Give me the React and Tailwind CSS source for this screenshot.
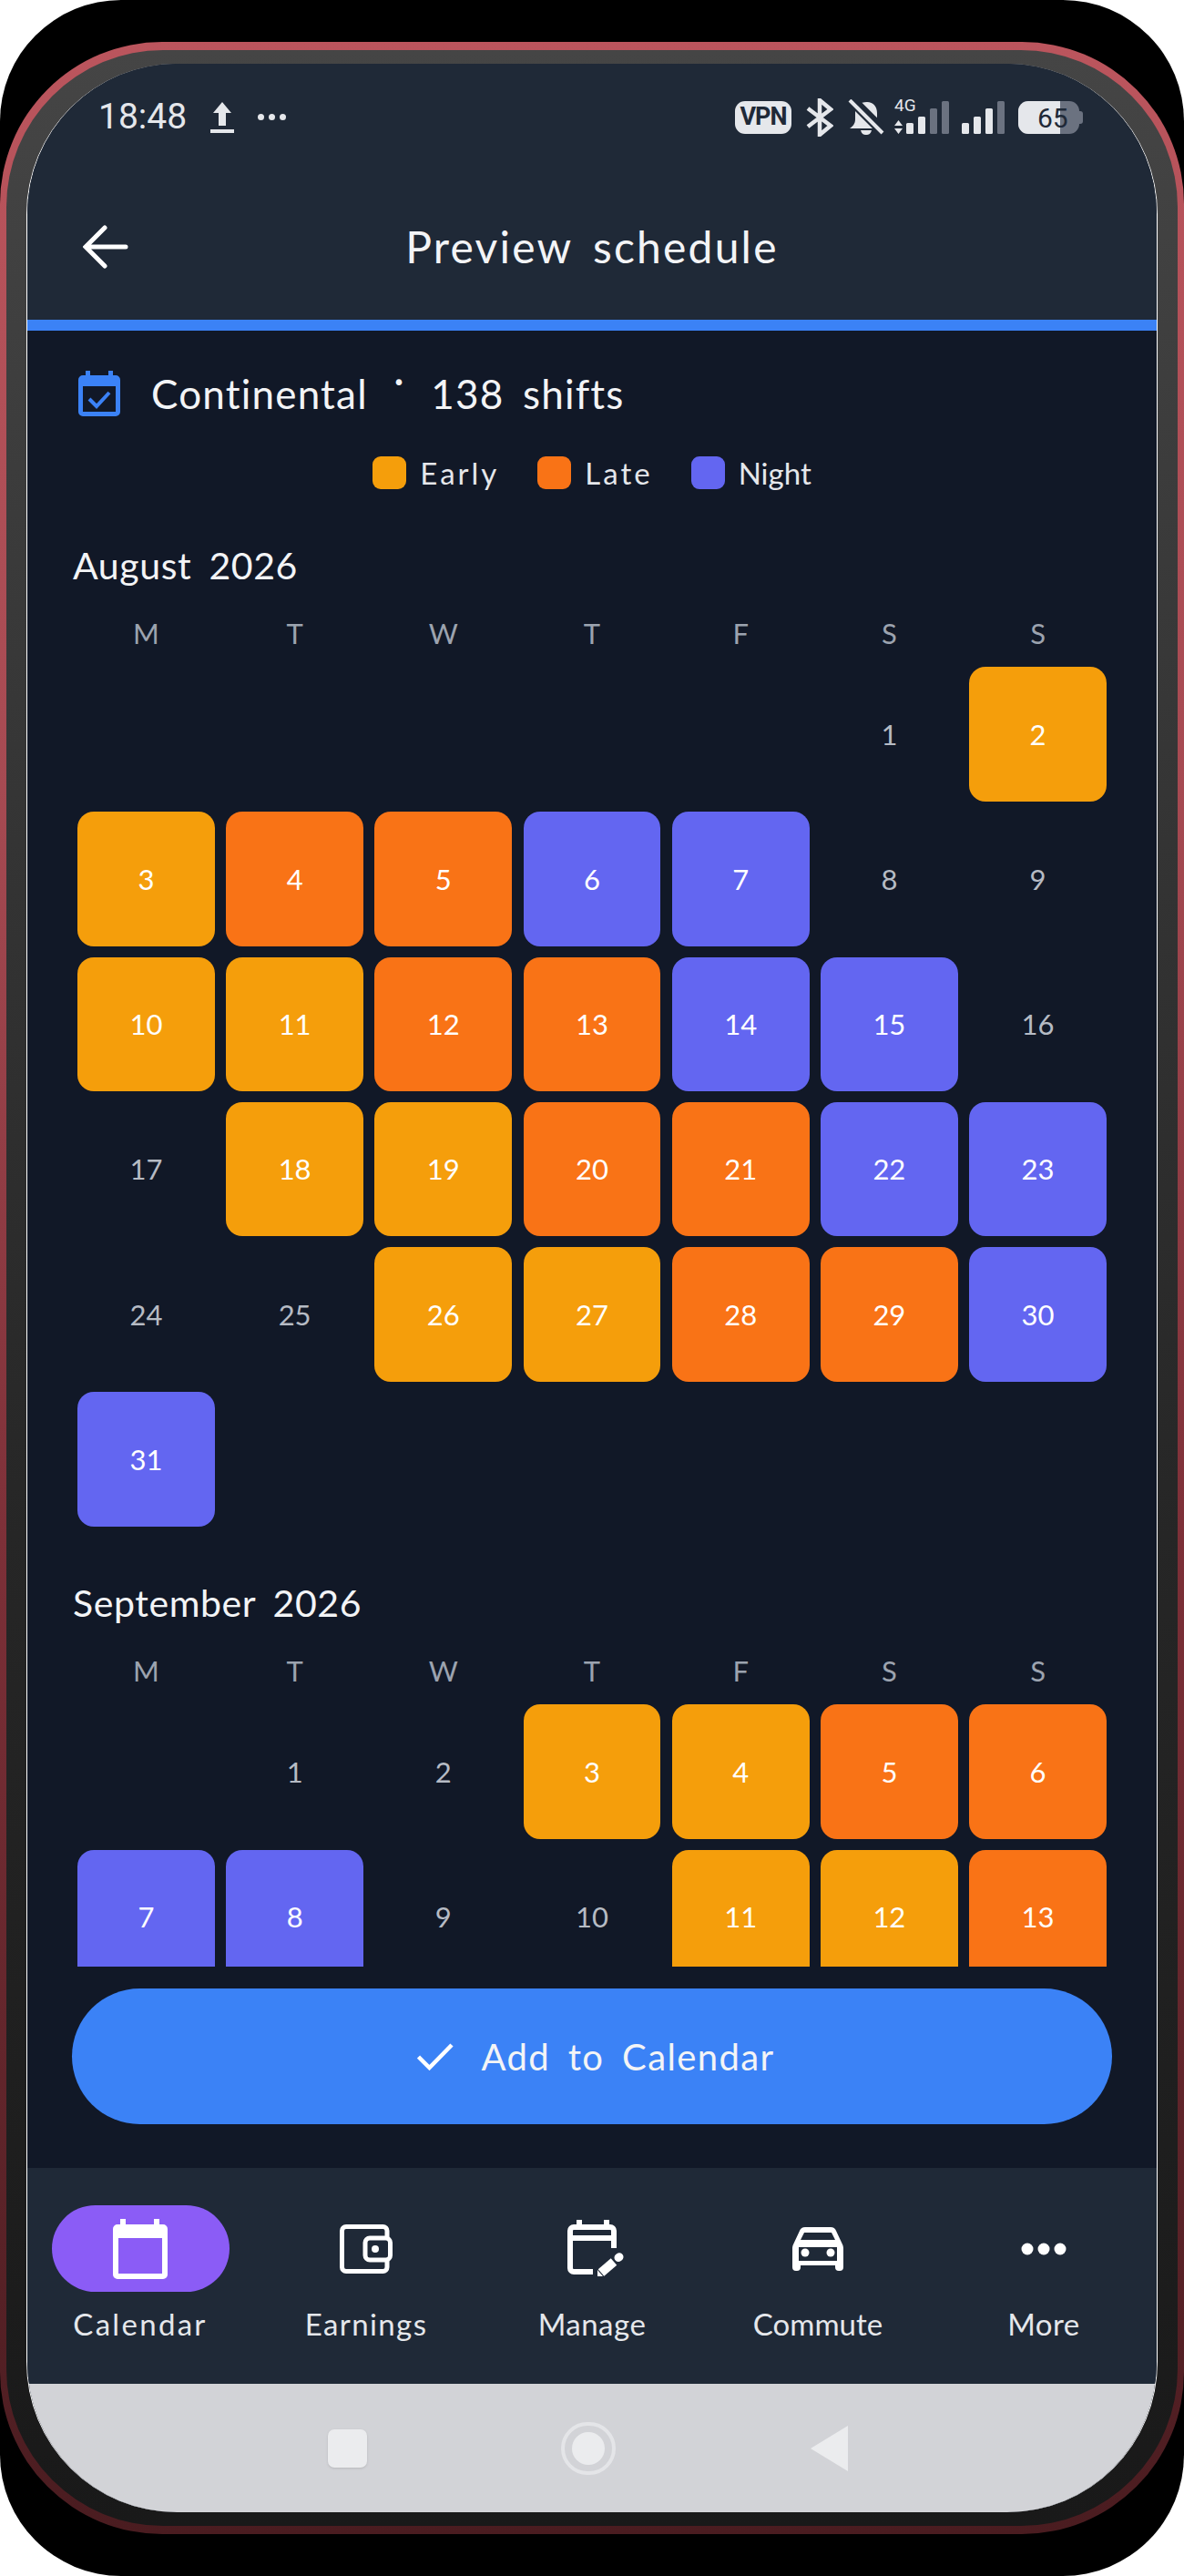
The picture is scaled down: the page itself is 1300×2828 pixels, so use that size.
const cellColors = {
  E: 'bg-[#f59e0b] text-white',
  L: 'bg-[#f97316] text-white',
  N: 'bg-[#6366f1] text-white',
  '-': 'text-[#b6bbc4]',
}

const august = '-EELLNN--EELLNN--EELLNN--EELLNN'
const september = '--EELLNN--EEL'

function UploadIcon() {
  return (
    <svg width="26" height="34" viewBox="0 0 26 34" fill="#e5e7eb">
      <path d="M13 0l10 12h-6v14H9V12H3z" />
      <rect x="0" y="30" width="26" height="4" />
    </svg>
  )
}

function BluetoothIcon() {
  return (
    <svg width="30" height="42" viewBox="0 0 30 42" fill="none" stroke="#e5e7eb" strokeWidth="4.5">
      <path d="M2 11l25 19-12 10V2l12 10L2 31" />
    </svg>
  )
}

function BellOffIcon() {
  return (
    <svg width="40" height="40" viewBox="0 0 40 40">
      <path fill="#e5e7eb" d="M21 3c7 0 11 5 11 12v12l-21-21c3-2 6-3 10-3zM8 13l19 19H2c3-2 6-5 6-10zM14 34h12c-1 4-3 5-6 5s-5-1-6-5z" />
      <path stroke="#1f2937" strokeWidth="8" d="M3 -3L42 36" />
      <path stroke="#e5e7eb" strokeWidth="4" d="M2 1L38 37" />
    </svg>
  )
}

function MobileSignal() {
  return (
    <svg width="60" height="43" viewBox="0 0 60 43" fill="#e5e7eb">
      <text x="0" y="15" fontSize="19" fontFamily="Roboto, sans-serif">4G</text>
      <path d="M4.5 25l4.5 6H0zM4.5 40L0 34h9z" />
      <rect x="13" y="28" width="8" height="12" rx="1.5" />
      <rect x="26" y="21" width="8" height="19" rx="1.5" />
      <rect x="39" y="12" width="8" height="28" rx="1.5" fill="#6b7280" />
      <rect x="52" y="4" width="8" height="36" rx="1.5" fill="#6b7280" />
    </svg>
  )
}

function WifiSignal() {
  return (
    <svg width="47" height="36" viewBox="0 0 47 36" fill="#e5e7eb">
      <rect x="0" y="24" width="8" height="12" rx="1.5" />
      <rect x="13" y="17" width="8" height="19" rx="1.5" />
      <rect x="26" y="8" width="8" height="28" rx="1.5" />
      <rect x="39" y="0" width="8" height="36" rx="1.5" fill="#6b7280" />
    </svg>
  )
}

function Battery() {
  return (
    <svg width="71" height="36" viewBox="0 0 71 36">
      <rect x="0" y="0" width="67" height="36" rx="11" fill="#6b7280" />
      <rect x="64" y="11" width="7" height="14" rx="3" fill="#6b7280" />
      <path fill="#e5e7eb" d="M11 0h35v36H11A11 11 0 0 1 0 25V11A11 11 0 0 1 11 0z" />
      <text x="21" y="29" fontSize="30" fontFamily="Roboto, sans-serif" fill="#1f2937">65</text>
    </svg>
  )
}

function ShiftIcon() {
  return (
    <svg width="46" height="50" viewBox="0 0 46 50">
      <path fill="#3b82f6" fillRule="evenodd" d="M8 0h5v5h20V0h5v5h3a5 5 0 0 1 5 5v35a5 5 0 0 1-5 5H5a5 5 0 0 1-5-5V10a5 5 0 0 1 5-5h3zM5 17v28h36V17z" />
      <path fill="none" stroke="#3b82f6" strokeWidth="4" d="M12 31l8 8 14-15" />
    </svg>
  )
}

function NavCalendar() {
  return (
    <svg width="60" height="66" viewBox="0 0 60 66" fill="#ffffff">
      <path fillRule="evenodd" d="M8 0h6v6h31V0h6v6h4a5 5 0 0 1 5 5v50a5 5 0 0 1-5 5H5a5 5 0 0 1-5-5V11a5 5 0 0 1 5-5h3zM6 21v39h48V21z" />
    </svg>
  )
}

function NavWallet() {
  return (
    <svg width="58" height="54" viewBox="0 0 58 54" fill="none" stroke="#ffffff" strokeWidth="5">
      <path d="M52 14V7a4.500 4.500 0 0 0-4.500-4.500H7A4.500 4.500 0 0 0 2.500 7v40A4.500 4.500 0 0 0 7 51.500h40.500A4.500 4.500 0 0 0 52 47v-7" />
      <rect x="28" y="15" width="27.500" height="24" rx="5" />
      <circle cx="39" cy="27" r="4" fill="#ffffff" stroke="none" />
    </svg>
  )
}

function NavManage() {
  return (
    <svg width="62" height="64" viewBox="0 0 62 64" fill="none" stroke="#ffffff" strokeWidth="6">
      <path d="M51 31V12a4 4 0 0 0-4-4H7a4 4 0 0 0-4 4v41a4 4 0 0 0 4 4h21M3 20h48M13 0v8M43 0v8" />
      <path strokeWidth="10" d="M37 58l14-12" />
      <path fill="#ffffff" stroke="none" d="M33 62v-7l6 7z" />
      <path strokeWidth="9" strokeLinecap="round" d="M56 41.500l1-.8" />
    </svg>
  )
}

function NavCar() {
  return (
    <svg width="56" height="48" viewBox="0 0 56 48" fill="#ffffff">
      <path fillRule="evenodd" d="M14 0h28c3 0 5 1.500 6 4l7 15c.7 1.500 1 3 1 4v21a4 4 0 0 1-4 4h-1a4 4 0 0 1-4-4v-2H9v2a4 4 0 0 1-4 4H4a4 4 0 0 1-4-4V23c0-1 .3-2.500 1-4L8 4c1-2.500 3-4 6-4zM13 6l-4 8h38l-4-8zM7 22v15h42V22z" />
      <circle cx="14" cy="28" r="4.500" />
      <circle cx="42" cy="28" r="4.500" />
    </svg>
  )
}

function NavDots() {
  return (
    <svg width="50" height="14" viewBox="0 0 50 14" fill="#ffffff">
      <circle cx="7" cy="7" r="6.500" />
      <circle cx="25" cy="7" r="6.500" />
      <circle cx="43" cy="7" r="6.500" />
    </svg>
  )
}

function Legend({ color, label, tracking }) {
  return (
    <div className="flex items-center gap-[15px]">
      <div className={`w-[37px] h-[36px] rounded-[9px] ${color}`} />
      <span className={`text-[33px] leading-[36px] text-[#e5e7eb] ${tracking}`}>{label}</span>
    </div>
  )
}

function Month({ title, offset, days }) {
  return (
    <section>
      <h2 className="ml-[1px] mb-[31.500px] text-[41px] leading-[48px] tracking-[0.600px] [word-spacing:8px] text-[#f3f4f6]">{title}</h2>
      <div className="mx-[6px] grid grid-cols-7 gap-x-[12.300px] text-center text-[31px] leading-[36px] text-[#9ca3af]">
        {['M', 'T', 'W', 'T', 'F', 'S', 'S'].map((d, i) => (
          <div key={i}>{d}</div>
        ))}
      </div>
      <div className="mt-[19.500px] mx-[6px] grid grid-cols-7 gap-x-[12.300px] gap-y-[11.800px] auto-rows-[147.500px]">
        {Array.from({ length: offset }).map((_, i) => (
          <div key={i} />
        ))}
        {days.split('').map((s, i) => (
          <div key={i} className={`rounded-[18px] flex items-center justify-center text-[31px] ${cellColors[s]}`}>
            {i + 1}
          </div>
        ))}
      </div>
    </section>
  )
}

function NavItem({ icon, label, active, iconClass, tracking }) {
  return (
    <div className="flex flex-col items-center">
      <div className={`w-[195px] h-[95px] rounded-full flex items-center justify-center ${active ? 'bg-[#8b5cf6]' : ''}`}>
        <div className={iconClass}>{icon}</div>
      </div>
      <span className={`mt-[15px] text-[33px] leading-[40px] text-[#e5e7eb] ${tracking}`}>{label}</span>
    </div>
  )
}

export default function App() {
  return (
    <div className="w-[1300px] h-[2828px] bg-white font-['Lato',sans-serif]">
      <div className="h-full rounded-[133px] bg-black py-[46px]">
        {/* phone frame */}
        <div className="h-full rounded-[178px] px-[7px] py-[9px] bg-[linear-gradient(180deg,#bb555d_0%,#a64a52_30%,#7d3038_60%,#4a1c20_100%)]">
          <div className="h-full rounded-[172px] px-[22px] py-[15px] bg-[linear-gradient(180deg,#454545_0%,#353535_30%,#262626_60%,#191919_100%)]">
            <div className="h-full rounded-[165px] overflow-hidden border-x border-white bg-[#111827] flex flex-col">
              {/* header */}
              <header className="h-[281px] shrink-0 bg-[#1f2937] pt-[37px]">
                <div className="h-[43px] pl-[78px] pr-[81px] flex items-center justify-between">
                  <div className="flex items-center">
                    <span className="font-['Roboto',sans-serif] text-[39px] leading-[43px] text-[#e5e7eb]">18:48</span>
                    <div className="ml-[26px]"><UploadIcon /></div>
                    <div className="ml-[26px] flex gap-[5px]">
                      <div className="w-[7px] h-[7px] rounded-full bg-[#e5e7eb]" />
                      <div className="w-[7px] h-[7px] rounded-full bg-[#e5e7eb]" />
                      <div className="w-[7px] h-[7px] rounded-full bg-[#e5e7eb]" />
                    </div>
                  </div>
                  <div className="flex items-center">
                    <div className="w-[62px] h-[36px] rounded-[11px] bg-[#e5e7eb] flex items-center justify-center font-['Roboto',sans-serif] font-bold text-[27px] leading-none tracking-[-1px] text-[#1f2937]">VPN</div>
                    <div className="ml-[16px]"><BluetoothIcon /></div>
                    <div className="ml-[16px]"><BellOffIcon /></div>
                    <div className="ml-[11px]"><MobileSignal /></div>
                    <div className="ml-[14px]"><WifiSignal /></div>
                    <div className="ml-[15px]"><Battery /></div>
                  </div>
                </div>
                <div className="mt-[75px] h-[92px] px-[61px] grid grid-cols-[1fr_auto_1fr] items-center">
                  <svg width="50" height="48" viewBox="0 0 50 48" fill="none" stroke="#ffffff" strokeWidth="5" strokeLinecap="round">
                    <path d="M47 24H4M24 3L3 24l21 21" />
                  </svg>
                  <h1 className="text-[48px] leading-[60px] tracking-[2.200px] [word-spacing:8px] text-[#f3f4f6]">Preview schedule</h1>
                  <div />
                </div>
              </header>
              <div className="h-[12px] shrink-0 bg-[#3b82f6]" />

              {/* schedule, cut off by the button area */}
              <main className="flex-1 min-h-0 overflow-hidden px-[49px] pt-[44px]">
                <div className="flex items-center pl-[7px] h-[50px]">
                  <ShiftIcon />
                  <div className="ml-[34px] text-[44px] leading-[50px] tracking-[1.200px] [word-spacing:8px] text-[#f3f4f6]">
                    Continental <span className="inline-block -translate-y-[16px] mx-[8px]">·</span> 138 shifts
                  </div>
                </div>
                <div className="mt-[44px] flex justify-center gap-[42px]">
                  <Legend color="bg-[#f59e0b]" label="Early" tracking="tracking-[3px]" />
                  <Legend color="bg-[#f97316]" label="Late" tracking="tracking-[3px]" />
                  <Legend color="bg-[#6366f1]" label="Night" tracking="tracking-[0px]" />
                </div>
                <div className="mt-[60px]">
                  <Month title="August 2026" offset={5} days={august} />
                </div>
                <div className="mt-[60.500px]">
                  <Month title="September 2026" offset={1} days={september} />
                </div>
              </main>

              <div className="shrink-0 h-[221px] px-[49px] pt-[24px]">
                <button className="w-full h-[149px] pl-[9px] rounded-full bg-[#3b82f6] flex items-center justify-center text-[40px] tracking-[1.400px] [word-spacing:8px] text-[#f3f4f6]">
                  <svg width="40" height="30" viewBox="0 0 40 30" fill="none" stroke="#ffffff" strokeWidth="4.500" className="mr-[30px]">
                    <path d="M1.500 15l12 12L38 2" />
                  </svg>
                  Add to Calendar
                </button>
              </div>

              {/* bottom nav */}
              <nav className="shrink-0 h-[237px] bg-[#1f2937] pt-[41px] grid grid-cols-5">
                <NavItem active label="Calendar" icon={<NavCalendar />} tracking="tracking-[2.300px]" />
                <NavItem label="Earnings" icon={<NavWallet />} tracking="tracking-[1.400px]" />
                <NavItem label="Manage" icon={<NavManage />} iconClass="ml-[8px]" tracking="tracking-[0.500px]" />
                <NavItem label="Commute" icon={<NavCar />} tracking="tracking-[0px]" />
                <NavItem label="More" icon={<NavDots />} tracking="tracking-[0.500px]" />
              </nav>

              {/* android bar */}
              <div className="shrink-0 h-[141px] bg-[#d2d3d7] flex items-start justify-center pr-[10px]">
                <div className="mt-[50px] w-[43px] h-[42px] rounded-[7px] bg-[#ebecee] shadow-sm" />
                <div className="ml-[213px] mt-[42px] w-[60px] h-[58px] rounded-full border-[4px] border-[#e4e5e8] flex items-center justify-center">
                  <div className="w-[36px] h-[36px] rounded-full bg-[#ebecee]" />
                </div>
                <svg width="41" height="50" viewBox="0 0 41 50" fill="#ebecee" className="ml-[214px] mt-[46px]">
                  <path d="M41 0v50L0 25z" />
                </svg>
              </div>
            </div>
          </div>
        </div>
      </div>
    </div>
  )
}
